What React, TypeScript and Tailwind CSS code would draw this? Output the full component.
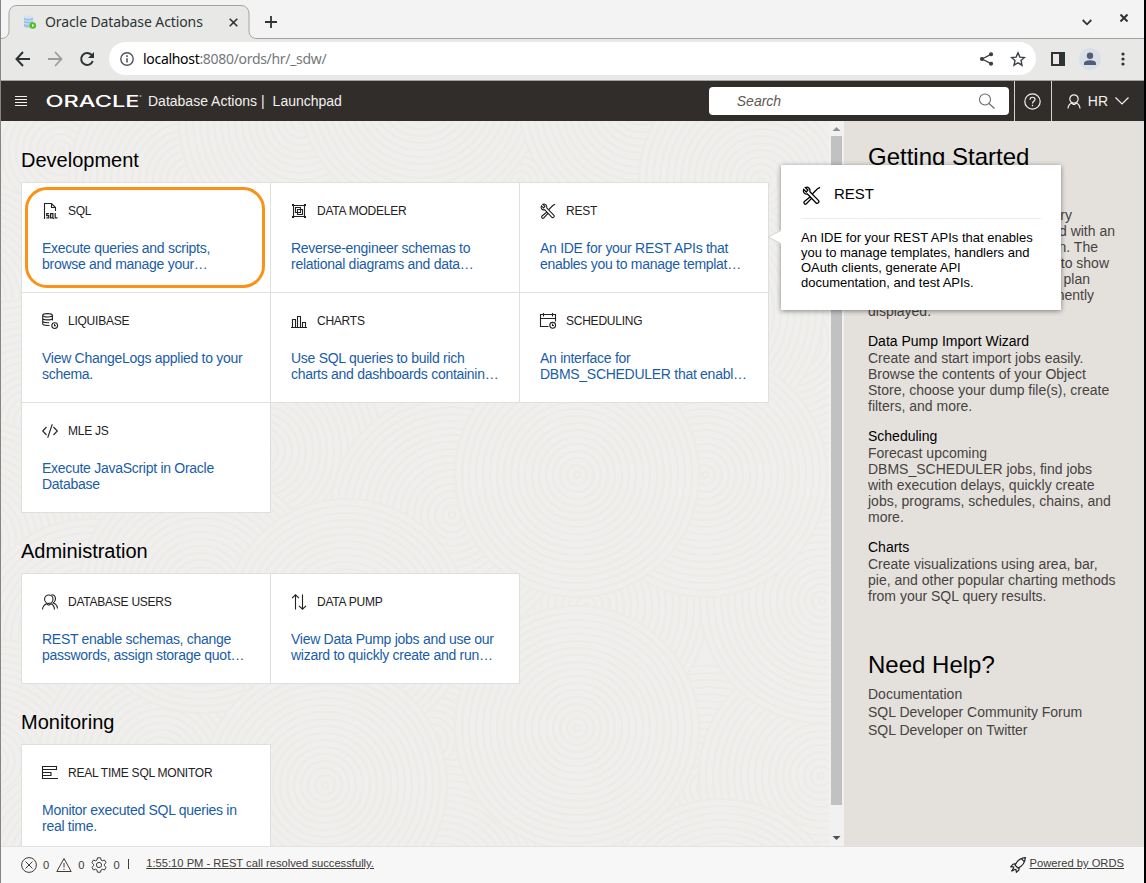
import React from 'react';
import type { ReactNode } from 'react';

type IconName =
  | 'sql' | 'modeler' | 'rest' | 'liquibase' | 'charts' | 'scheduling'
  | 'mle' | 'users' | 'pump' | 'monitor';

const drawings: Record<IconName, ReactNode> = {
  sql: (
    <>
      <path d="M2.500 16V.5h7l4 4V8M9.500.5v4h4" />
      <path d="M7 10.600H4.700v2h2.100v2.200H4.400M10.600 14.800H8.600v-4.200h2.300v4.200l.9 1M13.200 10v4.800h2.300" strokeWidth="1.200" />
    </>
  ),
  modeler: (
    <>
      <path d="M2.500 1v14M13.500 1v14M1 2.500h14M1 13.500h14" />
      <path d="M4.500 4.500h5v5h-5zM6.500 6.500h5v5h-5z" />
      <path d="M1 1h2v2H1zM13 1h2v2h-2zM1 13h2v2H1zM13 13h2v2h-2z" fill="currentColor" stroke="none" />
    </>
  ),
  rest: (
    <>
      <path d="M2.800 1.300 5 3.400 3.600 5 1.400 2.900C.3 5 2.200 7.400 4.600 6.700l7.300 7.600c1.100 1.100 3.200-.8 2.100-2L6.700 4.900C7.300 2.300 5 .2 2.800 1.300z" />
      <path d="m15.200 1.200-2.400 1.300-3.900 4M7 9l-5 4c-1.200 1.200.5 3 1.700 2l4.600-4.800" />
    </>
  ),
  liquibase: (
    <>
      <path d="M.7 2.400v8.400c0 1 2 1.700 4.800 1.700h2M10.400 2.400v5.200M.7 5.200c0 1 2 1.700 4.900 1.700s4.800-.7 4.800-1.700M.7 8c0 1 2 1.700 4.900 1.700h1.600" />
      <ellipse cx="5.550" cy="2.300" rx="4.850" ry="1.700" />
      <circle cx="12.700" cy="12.600" r="2.900" />
      <path d="M12.500 11v1.800h1.500" />
    </>
  ),
  charts: <path d="M0 14.500h16M1.500 14.500v-8h3v8M6.500 14.500v-11h3v11M11.500 14.500v-5h3v5" />,
  scheduling: (
    <>
      <path d="M8.500 13.500h-8v-12h15v7M.5 5.500h15M3.500 0v3.500M12.500 0v3.500" />
      <circle cx="12.700" cy="12.300" r="2.900" />
      <path d="M12.500 10.700v1.800h1.500" />
    </>
  ),
  mle: <path d="M4.500 4 .7 8l3.800 4M11.500 4l3.800 4-3.800 4M10.300 1.200l-4.600 13.600" />,
  users: (
    <>
      <circle cx="6.800" cy="5.200" r="4.200" />
      <path d="M.5 15.500c.2-3 1.700-4.800 4-5.800l1.700 1.300h1.200l1.700-1.300c2.300 1 3.200 2.800 3.400 5.800M9.500.8c2.500-.2 4 1.700 4 4 0 1.900-.9 3.300-2.300 4.200 2.600.8 4 2 4.300 5.500" />
    </>
  ),
  pump: <path d="M4.500 15.500V1M1 4.200 4.500.8 8 4.200M11.500.5V15M8 11.800l3.500 3.400 3.500-3.400" />,
  monitor: <path d="M.5 1v13M0 1.500h14.500v3H.5M.5 7.500h8.500v3H.5M0 13.500h16" />,
};

function Icon({ name, className = 'size-4' }: { name: IconName; className?: string }) {
  return (
    <svg viewBox="0 0 16 16" className={`${className} shrink-0 overflow-visible`} fill="none" stroke="currentColor" strokeWidth="1.100">
      {drawings[name]}
    </svg>
  );
}

interface CardData {
  icon: IconName;
  title: string;
  lines: [string, string];
  highlighted?: boolean;
}

const sections: { title: string; cards: CardData[] }[] = [
  {
    title: 'Development',
    cards: [
      { icon: 'sql', title: 'SQL', lines: ['Execute queries and scripts,', 'browse and manage your…'], highlighted: true },
      { icon: 'modeler', title: 'DATA MODELER', lines: ['Reverse-engineer schemas to', 'relational diagrams and data…'] },
      { icon: 'rest', title: 'REST', lines: ['An IDE for your REST APIs that', 'enables you to manage templat…'] },
      { icon: 'liquibase', title: 'LIQUIBASE', lines: ['View ChangeLogs applied to your', 'schema.'] },
      { icon: 'charts', title: 'CHARTS', lines: ['Use SQL queries to build rich', 'charts and dashboards containin…'] },
      { icon: 'scheduling', title: 'SCHEDULING', lines: ['An interface for', 'DBMS_SCHEDULER that enabl…'] },
      { icon: 'mle', title: 'MLE JS', lines: ['Execute JavaScript in Oracle', 'Database'] },
    ],
  },
  {
    title: 'Administration',
    cards: [
      { icon: 'users', title: 'DATABASE USERS', lines: ['REST enable schemas, change', 'passwords, assign storage quot…'] },
      { icon: 'pump', title: 'DATA PUMP', lines: ['View Data Pump jobs and use our', 'wizard to quickly create and run…'] },
    ],
  },
  {
    title: 'Monitoring',
    cards: [{ icon: 'monitor', title: 'REAL TIME SQL MONITOR', lines: ['Monitor executed SQL queries in', 'real time.'] }],
  },
];

const news: { title: string; lines: string[] }[] = [
  { title: 'Data Pump Import Wizard', lines: ['Create and start import jobs easily.', 'Browse the contents of your Object', 'Store, choose your dump file(s), create', 'filters, and more.'] },
  { title: 'Scheduling', lines: ['Forecast upcoming', 'DBMS_SCHEDULER jobs, find jobs', 'with execution delays, quickly create', 'jobs, programs, schedules, chains, and', 'more.'] },
  { title: 'Charts', lines: ['Create visualizations using area, bar,', 'pie, and other popular charting methods', 'from your SQL query results.'] },
];

function Card({ card }: { card: CardData }) {
  return (
    <div className="relative h-[111px] w-[250px] border border-[#dfdfdf] bg-white px-5 pt-5">
      <div className="flex h-4 items-center gap-[10px] text-[#222]">
        <Icon name={card.icon} />
        <span className="text-xs tracking-[-0.02em] whitespace-nowrap">{card.title}</span>
      </div>
      <p className="mt-[21px] text-sm leading-4 tracking-[-0.02em] whitespace-nowrap text-[#1a5da6]">
        {card.lines[0]}
        <br />
        {card.lines[1]}
      </p>
      {card.highlighted && (
        <div className="absolute top-1 left-[3px] h-[101px] w-[240px] rounded-[22px] border-3 border-[#fb9217]" />
      )}
    </div>
  );
}

const ripples = [
  { x: 60, y: 30 }, { x: 190, y: 60 }, { x: 300, y: 0 }, { x: 520, y: 60 },
  { x: 420, y: -30 }, { x: 640, y: -20 }, { x: 760, y: 60 }, { x: 790, y: 220 },
  { x: 700, y: 190 }, { x: -40, y: 180 }, { x: 30, y: 300 }, { x: -30, y: 420 },
  { x: 90, y: 520 }, { x: -10, y: 640 }, { x: 160, y: 640 }, { x: 260, y: 330 },
  { x: 90, y: 760 }, { x: 200, y: 470 }, { x: 430, y: 620 }, { x: 440, y: 760 },
  { x: 706, y: 667 }, { x: 820, y: 655 }, { x: 720, y: 800 }, { x: 585, y: 485 },
  { x: 576, y: 607 }, { x: 821, y: 480 }, { x: 704, y: 354 }, { x: 451, y: 394 },
  { x: 576, y: 354 }, { x: 345, y: 500 }, { x: 324, y: 664 },
];
const ringRadii = Array.from({ length: 18 }, (_, i) => 122 - i * 7);

function Ripples() {
  return (
    <svg className="absolute inset-0 size-full" viewBox="0 0 828 725" fill="#f0efed" stroke="#ebebe8" strokeWidth="2.200">
      {ripples.map((c) => (
        <g key={`${c.x},${c.y}`}>
          {ringRadii.map((r) => (
            <circle key={r} cx={c.x} cy={c.y} r={r} />
          ))}
        </g>
      ))}
    </svg>
  );
}

function BrowserChrome() {
  return (
    <>
      <div className="relative flex h-[39px] shrink-0 items-start bg-[#f3f3f3] text-[#2e3436]">
        <svg className="absolute inset-0 h-[39px] w-full" viewBox="0 0 1143 39" preserveAspectRatio="none">
          <path d="M0 38.500c5 0 8-3 8-8V14c0-5 3-8.500 8-8.500h224c5 0 8 3.500 8 8.500v16.500c0 5 3 8 8 8h887V40H0z" fill="#e8e8e6" />
          <path d="M0 38.500c5 0 8-3 8-8V14c0-5 3-8.500 8-8.500h224c5 0 8 3.500 8 8.500v16.500c0 5 3 8 8 8h887" fill="none" stroke="#a3a39f" />
        </svg>
        <div className="relative flex h-[39px] w-full items-center pt-[5px] pl-[21px]">
          <svg width="15" height="16" viewBox="0 0 15 16" className="shrink-0">
            <path d="M2 3v9c0 2 9 2 9 0V3z" fill="#9fc0e6" />
            <path d="M2 6c1 1.500 8 1.500 9 0M2 9c1 1.500 8 1.500 9 0" stroke="#dbe8f6" fill="none" />
            <ellipse cx="6.500" cy="3" rx="4.500" ry="1.700" fill="#d5e4f5" />
            <circle cx="10.800" cy="11.500" r="3.300" fill="#4fc020" />
            <path d="m10 9.800 2.400 1.700L10 13.200z" fill="white" />
          </svg>
          <span className="-mt-[2px] ml-2 w-[188px] font-['Noto_Sans',sans-serif] text-[14px] tracking-[-0.007em] whitespace-nowrap">Oracle Database Actions</span>
          <svg width="9" height="9" viewBox="0 0 9 9" className="-ml-[4px] shrink-0" stroke="currentColor" strokeWidth="1.600"><path d="m.7.700 7.600 7.600M8.300.7.700 8.300" /></svg>
          <svg width="12" height="12" viewBox="0 0 12 12" className="ml-[27px] shrink-0" stroke="currentColor" strokeWidth="1.800"><path d="M6 0v12M0 6h12" /></svg>
          <svg width="10" height="7" viewBox="0 0 10 7" className="mr-[28px] ml-auto shrink-0" stroke="currentColor" strokeWidth="1.800" fill="none"><path d="m.7 1 4.300 4.300L9.300 1" /></svg>
          <svg width="8" height="8" viewBox="0 0 8 8" className="mr-4 -mt-2 shrink-0" stroke="currentColor" strokeWidth="2"><path d="m.5.500 7 7M7.500.500l-7 7" /></svg>
        </div>
      </div>
      <div className="flex h-[42px] shrink-0 items-center border-b border-[#a3a39f] bg-[#e8e8e6] pb-[2px] text-[#2e3436]">
        <svg width="16" height="16" viewBox="0 0 16 16" className="ml-[14px]" fill="none" stroke="currentColor" strokeWidth="2"><path d="M15 8H2M8 1 1.500 8 8 15" /></svg>
        <svg width="16" height="16" viewBox="0 0 16 16" className="ml-4" fill="none" stroke="#9b9d9d" strokeWidth="1.800"><path d="M1 8h13M8 1l6.500 7L8 15" /></svg>
        <svg width="16" height="16" viewBox="0 0 16 16" className="ml-4" fill="none" stroke="currentColor" strokeWidth="2"><path d="M13.800 10A6 6 0 1 1 12.500 3.800L14 5.500" /><path d="M15 1v6H9z" fill="currentColor" stroke="none" /></svg>
        <div className="ml-[14px] flex h-[33px] w-[927px] items-center rounded-full bg-white">
          <svg width="14" height="14" viewBox="0 0 14 14" className="ml-[11px]" fill="none" stroke="#50555c" strokeWidth="1.400"><circle cx="7" cy="7" r="6.200" /><path d="M7 6.200v4.300M7 3.300V5" strokeWidth="1.600" /></svg>
          <span className="ml-[9px] font-['Noto_Sans',sans-serif] text-[14px] tracking-[-0.022em] whitespace-nowrap text-[#75787a]"><span className="text-black">localhost</span>:8080/ords/hr/_sdw/</span>
          <svg width="13" height="14" viewBox="0 0 13 14" className="ml-auto" fill="#3c4043" stroke="#3c4043" strokeWidth="1.300"><path d="M11 2.300 2 7l9 4.700" fill="none" /><circle cx="11" cy="2.300" r="1.400" /><circle cx="2" cy="7" r="1.400" /><circle cx="11" cy="11.700" r="1.400" /></svg>
          <svg width="16" height="16" viewBox="0 0 16 16" className="mr-[10px] ml-[17px]" fill="none" stroke="#3c4043" strokeWidth="1.400"><path d="m8 1.800 1.900 4.300 4.600.4-3.500 3.100 1 4.600L8 11.800l-4 2.400 1-4.600L1.500 6.500l4.600-.4z" /></svg>
        </div>
        <svg width="14" height="14" viewBox="0 0 14 14" className="ml-[15px]"><path d="M0 0h14v14H0zM2 2v10h6V2z" fill="currentColor" fillRule="evenodd" /></svg>
        <svg width="22" height="22" viewBox="0 0 22 22" className="ml-[14px]"><circle cx="11" cy="11" r="11" fill="#dadfe8" /><circle cx="11" cy="7.700" r="3.200" fill="#535d78" /><path d="M5 17v-2c0-2 4-2.800 6-2.800s6 .8 6 2.800v2z" fill="#535d78" /></svg>
        <svg width="4" height="14" viewBox="0 0 4 14" className="ml-5" fill="currentColor"><circle cx="2" cy="2" r="1.600" /><circle cx="2" cy="7" r="1.600" /><circle cx="2" cy="12" r="1.600" /></svg>
      </div>
    </>
  );
}

function AppHeader() {
  return (
    <header className="flex h-10 shrink-0 items-center bg-[#312d2a] text-sm text-[#f3f1ee]">
      <svg width="12" height="11" viewBox="0 0 12 11" className="ml-[14px]" stroke="currentColor"><path d="M0 .5h12M0 3.500h12M0 6.500h12M0 9.500h12" /></svg>
      <svg width="96" height="16" viewBox="0 0 96 16" className="ml-[19px]" fill="white">
        <text x="-.5" y="13.500" textLength="94" lengthAdjust="spacingAndGlyphs" fontFamily="Inter" fontWeight="500" fontSize="15.500">ORACLE</text>
        <circle cx="94.500" cy="3" r=".9" fill="#aaa7a4" />
      </svg>
      <span className="ml-[6px]">Database Actions</span>
      <span className="ml-1">|</span>
      <span className="ml-2">Launchpad</span>
      <div className="ml-auto flex h-7 w-[300px] items-center justify-between rounded-sm bg-white pr-[14px] pl-7">
        <span className="text-[#5c5855] italic">Search</span>
        <svg width="17" height="17" viewBox="0 0 17 17" fill="none" stroke="#6d6966" strokeWidth="1.100"><circle cx="7" cy="6.500" r="5.500" /><path d="m11 10.500 5.500 5" /></svg>
      </div>
      <div className="ml-[5px] flex h-10 w-[38px] items-center justify-center border-x border-[#d5d1cd]">
        <svg width="17" height="17" viewBox="0 0 17 17" fill="none" stroke="currentColor" strokeWidth="1.200"><circle cx="8.500" cy="8.500" r="7.700" /><path d="M6 6.700c0-3.300 5-3.200 5-.2 0 1.800-2.500 1.900-2.500 4M8.500 11.800v1.400" /></svg>
      </div>
      <svg width="14" height="15" viewBox="0 0 14 15" className="ml-[15px]" fill="none" stroke="currentColor" strokeWidth="1.200"><circle cx="7" cy="5" r="4.200" /><path d="M1 14.500c.2-3 1.500-4.500 3.700-5.500L6.300 10.500h1.400L9.300 9c2.200 1 3.500 2.500 3.700 5.500" /></svg>
      <span className="ml-[7px]">HR</span>
      <svg width="14" height="8" viewBox="0 0 14 8" className="mr-[15px] ml-[7px]" fill="none" stroke="currentColor" strokeWidth="1.200"><path d="m.5.500 6.500 6.500L13.500.500" /></svg>
    </header>
  );
}

function RestPopup() {
  return (
    <div className="absolute top-[44px] left-[780px] h-[145px] w-[280px] bg-white px-5 pt-[19px] shadow-[0_1px_5px_rgba(0,0,0,0.45)]">
      <svg className="absolute top-[65px] -left-[14px]" width="14" height="14" viewBox="0 0 14 14"><path d="M14 0 1 7l13 7z" fill="white" /><path d="M14 .5 1 7l13 6.500" stroke="#d2d2d2" fill="none" /></svg>
      <div className="flex h-[35px] items-start border-b border-[#ececec] text-[15px] leading-5 text-black">
        <Icon name="rest" className="mt-[2px] ml-px h-[19px] w-[19px]" />
        <span className="ml-[13px]">REST</span>
      </div>
      <p className="mt-[11px] text-[13px] leading-[15px] whitespace-nowrap text-black">
        An IDE for your REST APIs that enables<br />
        you to manage templates, handlers and<br />
        OAuth clients, generate API<br />
        documentation, and test APIs.
      </p>
    </div>
  );
}

function Help() {
  return (
    <aside className="w-[300px] shrink-0 overflow-hidden bg-[#e4e1dd] pl-6 text-sm leading-4 whitespace-nowrap text-[#47423f]">
      <h2 className="mt-[22px] h-16 text-2xl leading-7 text-black">Getting Started</h2>
      <p className="w-[204px] text-right">query</p>
      <p className="w-[247px] text-right">and with an</p>
      <p className="w-[230px] text-right">plan. The</p>
      <p className="w-[241px] text-right">to show</p>
      <p className="w-[222px] text-right">plan</p>
      <p className="w-[226px] text-right">prominently</p>
      <p>displayed.</p>
      {news.map((n) => (
        <div key={n.title} className="mt-[14px]">
          <h3 className="h-[17px] text-black">{n.title}</h3>
          {n.lines.map((l) => <p key={l}>{l}</p>)}
        </div>
      ))}
      <h2 className="mt-[47px] h-[34px] text-2xl leading-7 text-black">Need Help?</h2>
      <div className="leading-[18px]">
        <p>Documentation</p>
        <p>SQL Developer Community Forum</p>
        <p>SQL Developer on Twitter</p>
      </div>
    </aside>
  );
}

function Footer() {
  return (
    <footer className="flex h-[37px] shrink-0 items-center border-t border-[#e2e2e2] bg-[#f7f7f7] pl-5 text-[11.2px] text-[#403c38]">
      <svg width="16" height="16" viewBox="0 0 16 16" fill="none" stroke="currentColor"><circle cx="8" cy="8" r="7.400" /><path d="m4.500 4.500 7 7M11.500 4.500l-7 7" /></svg>
      <span className="ml-[6px]">0</span>
      <svg width="16" height="16" viewBox="0 0 16 16" className="ml-[7px]" fill="none" stroke="currentColor"><path d="m8 1.500 7.200 13H.8zM8 6v4.500M8 11.800V13" /></svg>
      <span className="ml-[6px]">0</span>
      <svg width="16" height="16" viewBox="0 0 16 16" className="ml-[7px]" fill="none" stroke="currentColor"><circle cx="8" cy="8" r="2.600" /><path d="M6.400.8h3.200l.4 2.200 1.300.8 2.200-.8 1.600 2.700-1.700 1.500v1.600l1.700 1.500-1.600 2.700-2.200-.8-1.300.8-.4 2.200H6.400L6 13l-1.300-.8-2.200.8-1.600-2.700 1.700-1.500V7.200L.9 5.700 2.500 3l2.200.8L6 3z" /></svg>
      <span className="ml-[6px]">0</span>
      <span className="-mt-[2px] ml-2 h-[10px] w-px bg-[#403c38]" />
      <span className="-mt-[3px] ml-[17.500px] whitespace-nowrap underline">1:55:10 PM - REST call resolved successfully.</span>
      <svg width="16" height="16" viewBox="0 0 16 16" className="ml-auto" fill="none" stroke="#222" strokeWidth="1.200"><path d="M5 8C7.300 3.500 10 1 15.300.700 15 6 12.500 9 8 11zM5 8l3 3M5.800 6.700 3 7.200.8 9.700l3.500.5M9.300 10.300l-.5 2.900L6.400 15.200l-.6-3.400M11.300 1.700l3 3M3.800 10.700 1.500 14.300 5.300 12.200" /></svg>
      <span className="mr-5 ml-[3px] -mt-[3px] whitespace-nowrap underline">Powered by ORDS</span>
    </footer>
  );
}

export default function App() {
  return (
    <div className="flex h-[883px] w-[1146px] flex-col overflow-hidden border-r-2 border-l border-r-black border-l-[#858585] font-['Liberation_Sans',sans-serif]">
      <BrowserChrome />
      <AppHeader />
      <div className="relative flex h-[725px] shrink-0">
        <main className="relative h-[725px] w-[828px] overflow-hidden bg-[#f0efed]">
          <Ripples />
          <div className="relative pt-px pl-5">
            {sections.map((s) => (
              <section key={s.title}>
                <h2 className="h-[60px] pt-[25px] text-xl leading-[26px] text-black">{s.title}</h2>
                <div className="grid auto-rows-[110px] grid-cols-[repeat(3,249px)] pb-px">
                  {s.cards.map((c) => <Card key={c.title} card={c} />)}
                </div>
              </section>
            ))}
          </div>
        </main>
        <div className="flex w-[15px] shrink-0 flex-col items-center bg-[#f1f1f1]">
          <svg width="15" height="15" viewBox="0 0 15 15"><path d="m7.500 6 4 4h-8z" fill="#8f8f8f" /></svg>
          <div className="h-[669px] w-[11px] bg-[#c1c1c1]" />
          <svg width="15" height="15" viewBox="0 0 15 15" className="mt-auto mb-px"><path d="m7.500 10 4-4h-8z" fill="#505050" /></svg>
        </div>
        <Help />
        <RestPopup />
      </div>
      <Footer />
    </div>
  );
}
